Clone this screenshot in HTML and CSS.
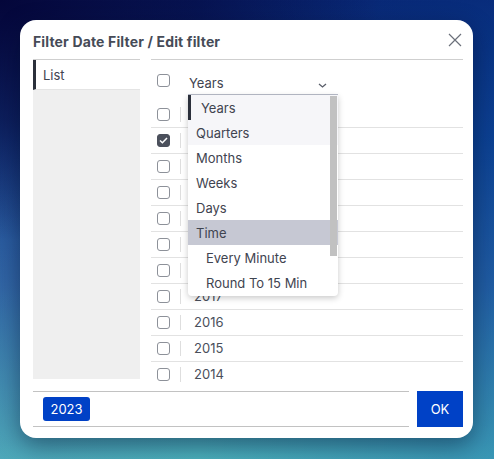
FILE: index.html
```html
<!DOCTYPE html>
<html>
<head>
<meta charset="utf-8">
<link rel="stylesheet" href="styles.css">
</head>
<body>
<div class="dialog">
  <div class="dlg-head">
    <div class="title">Filter Date Filter / Edit filter</div>
    <svg class="close" width="14" height="14" viewBox="0 0 14 14"><path d="M1 1L13 13M13 1L1 13" stroke="#6b707a" stroke-width="1.2" fill="none"/></svg>
  </div>
  <div class="dlg-body">
    <div class="side">
      <div class="side-item">List</div>
      <div class="side-fill"></div>
    </div>
    <div class="main">
      <div class="main-head">
        <span class="cb"></span>
        <div class="select">
          <span>Years</span>
          <svg class="chev" width="9" height="5" viewBox="0 0 9 5"><path d="M1 1L4.5 4L8 1" stroke="#5a5f6a" stroke-width="1.3" fill="none"/></svg>
        </div>
      </div>
      <div class="rows">
        <div class="row"><span class="cb"></span><span class="div"></span><span class="yr">2024</span></div>
        <div class="row"><span class="cb on"><svg width="9" height="7" viewBox="0 0 9 7"><path d="M1 3.5L3.4 5.8L8 1" stroke="#fff" stroke-width="1.5" fill="none"/></svg></span><span class="div"></span><span class="yr">2023</span></div>
        <div class="row"><span class="cb"></span><span class="div"></span><span class="yr">2022</span></div>
        <div class="row"><span class="cb"></span><span class="div"></span><span class="yr">2021</span></div>
        <div class="row"><span class="cb"></span><span class="div"></span><span class="yr">2020</span></div>
        <div class="row"><span class="cb"></span><span class="div"></span><span class="yr">2019</span></div>
        <div class="row"><span class="cb"></span><span class="div"></span><span class="yr">2018</span></div>
        <div class="row"><span class="cb"></span><span class="div"></span><span class="yr">2017</span></div>
        <div class="row"><span class="cb"></span><span class="div"></span><span class="yr">2016</span></div>
        <div class="row"><span class="cb"></span><span class="div"></span><span class="yr">2015</span></div>
        <div class="row"><span class="cb"></span><span class="div"></span><span class="yr">2014</span></div>
      </div>
      <div class="menu">
        <div class="opt sel">Years</div>
        <div class="opt hov">Quarters</div>
        <div class="opt">Months</div>
        <div class="opt">Weeks</div>
        <div class="opt">Days</div>
        <div class="opt grp">Time</div>
        <div class="opt sub">Every Minute</div>
        <div class="opt sub">Round To 15 Min</div>
        <div class="thumb"></div>
      </div>
    </div>
  </div>
  <div class="dlg-foot">
    <div class="field"><span class="chip">2023</span></div>
    <button class="ok">OK</button>
  </div>
</div>
</body>
</html>
```
FILE: styles.css
```css
* { box-sizing: border-box; }
html, body { margin: 0; height: 459px; overflow: hidden; }
body {
  font-family: Inter, "Noto Sans", sans-serif;
  color: #3f4450;
  background:
    radial-gradient(ellipse 380px 240px at 0% 0%, #04063a 0%, rgba(4,6,58,0.6) 50%, rgba(4,6,58,0) 100%),
    linear-gradient(90deg, rgba(90,110,170,0.15) 0%, rgba(10,70,160,0) 40%, rgba(0,70,160,0.25) 100%),
    linear-gradient(180deg, #0a2470 0%, #0f3f8e 30%, #2a64a4 62%, #4cb2bc 100%);
  padding: 20px 21px 21px 20px;
}
.dialog {
  width: 453px;
  height: 418px;
  background: #fff;
  border-radius: 16px;
  box-shadow: 0 8px 24px rgba(0, 10, 40, 0.45);
  padding: 0 10px 0 13px;
  display: flex;
  flex-direction: column;
}
.dlg-head {
  height: 39px;
  display: flex;
  align-items: center;
  justify-content: space-between;
  padding-top: 3px;
}
.title {
  font-weight: 700;
  font-size: 14px;
  color: #464b57;
  letter-spacing: 0.15px;
}
.close { margin-right: 1px; margin-top: -3px; }
.dlg-body {
  display: flex;
  gap: 11px;
  height: 332px;
}
.side {
  width: 107px;
  border-top: 1px solid #cfcfcf;
  display: flex;
  flex-direction: column;
}
.side-item {
  height: 30px;
  border-left: 3px solid #2b303b;
  border-bottom: 1px solid #e4e4e4;
  padding: 1px 0 0 7px;
  font-size: 13px;
  line-height: 29px;
  color: #3f4450;
}
.side-fill {
  height: 289px;
  background: #efefef;
}
.main {
  flex: 1;
  border-top: 1px solid #cfcfcf;
  position: relative;
}
.main-head {
  height: 41px;
  display: flex;
  align-items: flex-start;
  padding: 14px 0 0 6px;
}
.cb {
  width: 13px;
  height: 13px;
  border: 1.5px solid #8d9199;
  border-radius: 3px;
  flex: none;
  display: flex;
  align-items: center;
  justify-content: center;
}
.cb.on { background: #4b505c; border-color: #4b505c; }
.select {
  margin-left: 18px;
  width: 150px;
  height: 21px;
  border-bottom: 1px solid #b9bdca;
  display: flex;
  justify-content: space-between;
  font-size: 13px;
  line-height: 14px;
  padding: 1px 11px 0 1px;
  margin-top: 0;
}
.select span { margin-top: 1px; }
.chev { margin-top: 8px; }
.row {
  height: 26px;
  display: flex;
  align-items: center;
  padding-left: 6px;
  border-top: 1px solid #e2e2e2;
}
.row:first-child { border-top: 0; }
.row .div {
  width: 1px;
  height: 15px;
  background: #dedede;
  margin-left: 10px;
}
.yr {
  margin-left: 13px;
  font-size: 13px;
  color: #4a4f5b;
  margin-top: -2px;
}
.menu {
  position: absolute;
  left: 37px;
  top: 35px;
  width: 150px;
  height: 201px;
  background: #fff;
  border-radius: 0 0 4px 4px;
  box-shadow: 0 2px 6px rgba(0, 0, 0, 0.22);
  overflow: hidden;
  font-size: 13px;
  color: #3f4450;
}
.opt {
  height: 25px;
  padding: 2px 0 0 8px;
  line-height: 23px;
}
.opt.sel { background: #f6f6f9; border-left: 3px solid #2b303b; padding-left: 10px; }
.opt.hov { background: #f6f6f9; }
.opt.grp { background: #c6c8d3; }
.opt.sub { padding-left: 18px; }
.thumb {
  position: absolute;
  right: 1px;
  top: 1px;
  width: 7px;
  height: 160px;
  background: #c1c1c1;
}
.dlg-foot {
  display: flex;
  gap: 8px;
  height: 36px;
}
.field {
  flex: 1;
  border-top: 1px solid #c2c2c2;
  border-bottom: 1px solid #c2c2c2;
  padding: 5px 0 0 10px;
}
.chip {
  display: inline-block;
  width: 47px;
  height: 24px;
  line-height: 24px;
  text-align: center;
  background: #0041c6;
  color: #fff;
  font-size: 13px;
  border-radius: 3px;
}
.ok {
  width: 46px;
  height: 36px;
  border: 0;
  background: #0041c6;
  color: #fff;
  font-family: inherit;
  font-size: 13px;
  padding: 0;
}
```
